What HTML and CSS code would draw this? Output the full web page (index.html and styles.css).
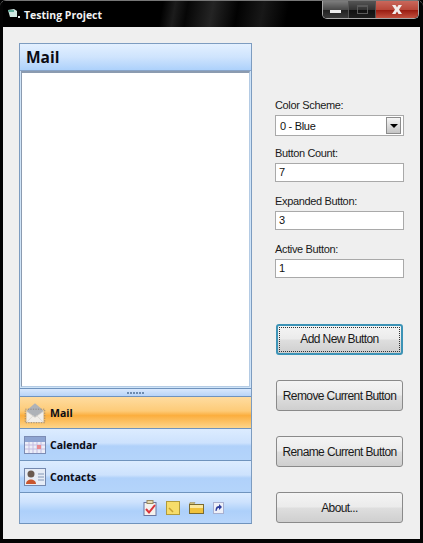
FILE: index.html
```html
<!DOCTYPE html>
<html>
<head>
<meta http-equiv="Content-Type" content="text/html; charset=utf-8"/>
<title>Testing Project</title>
<link rel="stylesheet" href="styles.css">
</head>
<body>
<div class="window">
  <div class="titlebar">
    <svg class="app-icon" width="16" height="16" viewBox="0 0 16 16">
      <path d="M1 3 L7 2 L10 4 L10 10 L3 10 Z" fill="#cfe8e2"/>
      <path d="M1 3 L7 3 L7 5 L2 5 Z" fill="#5fae9c"/>
      <rect x="11" y="9" width="2" height="2" fill="#dfe8e8"/>
    </svg>
    <span class="title">Testing Project</span>
    <div class="captions">
      <div class="cap cap-min"><span class="glyph-min"></span></div>
      <div class="cap cap-max"><span class="glyph-max"></span></div>
      <div class="cap cap-close">
        <svg width="16" height="11" viewBox="0 0 16 11"><path d="M3 1 L6.500 1 L8 3.400 L9.500 1 L13 1 L10 5.500 L13 10 L9.500 10 L8 7.600 L6.500 10 L3 10 L6 5.500 Z" fill="#f2ecea"/></svg>
      </div>
    </div>
  </div>

  <div class="client">
    <div class="navpane">
      <div class="pane-header">Mail</div>
      <div class="pane-body"><div class="pane-content"></div></div>
      <div class="grip"><span></span><span></span><span></span><span></span><span></span><span></span></div>

      <div class="navbtn active">
        <svg class="nav-icon" width="26" height="26" viewBox="0 0 26 26">
          <path d="M3 10 L13 1.500 L23 10 L23 24 L3 24 Z" fill="#aeb2b8"/>
          <path d="M3 11 L13 18 L23 11 L23 24 L3 24 Z" fill="#f1eeea"/>
          <path d="M3 11 L13 18 L23 11" fill="none" stroke="#ccc8c4"/>
          <path d="M3 24 L11 16 M23 24 L15 16" stroke="#d8d4d0" fill="none"/>
          <rect x="1.500" y="8.500" width="23" height="16" fill="none" stroke="#8a7f78" stroke-dasharray="1.500 1.500"/>
        </svg>
        <span>Mail</span>
      </div>
      <div class="navbtn">
        <svg class="nav-icon" width="22" height="18" viewBox="0 0 22 18">
          <rect x="0.500" y="0.500" width="21" height="17" fill="#eceef8" stroke="#7c8cb4"/>
          <rect x="1" y="1" width="20" height="5" fill="#8ea4d2"/>
          <path d="M1 9 H21 M1 13 H21 M5 6 V17 M9 6 V17 M13 6 V17 M17 6 V17" stroke="#c4bce0"/>
          <rect x="13" y="9" width="4" height="4" fill="#e88a90"/>
        </svg>
        <span>Calendar</span>
      </div>
      <div class="navbtn">
        <svg class="nav-icon" width="22" height="18" viewBox="0 0 22 18">
          <rect x="0.500" y="0.500" width="21" height="17" fill="#e6ecf6" stroke="#7488ae"/>
          <circle cx="7" cy="6" r="3.500" fill="#6a5a50"/>
          <path d="M2 16 C2 10 12 10 12 16 Z" fill="#c8562e"/>
          <path d="M14 6 H20 M14 9 H20 M14 12 H20" stroke="#a4b2cc" stroke-width="1.500"/>
        </svg>
        <span>Contacts</span>
      </div>
      <div class="nav-footer">
        <svg class="mini" width="14" height="16" viewBox="0 0 14 16">
          <rect x="1" y="2.500" width="12" height="13" fill="#f4f2ee" stroke="#6a76a0"/>
          <rect x="4" y="0.500" width="6" height="3" fill="#e4d8b0" stroke="#9a8a60"/>
          <path d="M3 9 L6 12.500 L12 5" fill="none" stroke="#d8343a" stroke-width="2"/>
        </svg>
        <svg class="mini" width="14" height="14" viewBox="0 0 14 14">
          <rect x="0.500" y="0.500" width="13" height="13" fill="#f6dc6a" stroke="#b09a3c"/>
          <path d="M3 7 L7 11" stroke="#c8a030" stroke-width="1.500"/>
        </svg>
        <svg class="mini" width="15" height="12" viewBox="0 0 15 12">
          <path d="M0.500 2 L5 2 L6 0.500 L1 0.500 Z" fill="#e8d68c" stroke="#8a7a44" stroke-width="0.500"/>
          <rect x="0.500" y="2.500" width="14" height="9" fill="#f0c23c" stroke="#7a6a30"/>
          <rect x="1" y="3" width="13" height="3" fill="#fae8a0"/>
        </svg>
        <svg class="mini" width="11" height="12" viewBox="0 0 11 12">
          <rect x="0.500" y="0.500" width="10" height="11" fill="#eef0f8" stroke="#a8b0d0"/>
          <path d="M2.500 9 C2.500 5 4 4 6 4 L6 2 L9 5 L6 8 L6 6 C4.500 6 4 7 3.500 9 Z" fill="#2c3c9c"/>
        </svg>
      </div>
    </div>

    <div class="options">
      <label class="field-label">Color Scheme:</label>
      <div class="combo">
        <span class="combo-text">0 - Blue</span>
        <span class="combo-arrow"></span>
      </div>
      <label class="field-label">Button Count:</label>
      <div class="textbox">7</div>
      <label class="field-label">Expanded Button:</label>
      <div class="textbox">3</div>
      <label class="field-label">Active Button:</label>
      <div class="textbox">1</div>

      <div class="buttons">
        <div class="btn focused"><span>Add New Button</span></div>
        <div class="btn"><span>Remove Current Button</span></div>
        <div class="btn"><span>Rename Current Button</span></div>
        <div class="btn"><span>About...</span></div>
      </div>
    </div>
  </div>
</div>
</body>
</html>
```

FILE: styles.css
```css
html, body {
  margin: 0;
  padding: 0;
  background: #000;
}

body {
  width: 423px;
  height: 543px;
  overflow: hidden;
  font-family: "Liberation Sans", Arial, sans-serif;
  font-size: 11px;
  color: #111;
}

.window {
  width: 423px;
  height: 543px;
  box-sizing: border-box;
  padding: 0 3px 4px 3px;
  background: #030303;
  border-top: 1px solid #777;
  border-radius: 6px 6px 0 0;
  display: flex;
  flex-direction: column;
}

.titlebar {
  height: 26px;
  display: flex;
  align-items: flex-start;
  background: linear-gradient(100deg, #000 38%, #1c1c1c 41%, #060606 44%, #242424 50%, #020202 56%, #181818 62%, #000 68%);
}

.app-icon {
  margin: 6px 0 0 4px;
}

.title {
  margin: 6px 0 0 1px;
  color: #f2f2f2;
  font-family: "Open Sans", sans-serif;
  font-size: 10.5px;
  font-weight: 700;
  line-height: 16px;
}

.captions {
  margin-left: auto;
  margin-right: 1px;
  display: flex;
  height: 17px;
  border: 1px solid #a8a8a8;
  border-top: none;
  border-radius: 0 0 5px 5px;
  overflow: hidden;
}

.cap {
  display: flex;
  align-items: center;
  justify-content: center;
  border-right: 1px solid #555;
}

.cap-min {
  width: 25px;
  background: linear-gradient(#7d7d7d, #4a4a4a 50%, #222 55%, #3a3a3a);
}

.cap-max {
  width: 26px;
  background: linear-gradient(#555, #333 50%, #111 55%, #1e1e1e);
}

.cap-close {
  width: 42px;
  border-right: none;
  background: linear-gradient(#c9685c, #b8483a 50%, #9a1d12 55%, #c2503e);
}

.glyph-min {
  width: 11px;
  height: 3px;
  margin-top: 4px;
  background: #eee;
}

.glyph-max {
  width: 11px;
  height: 9px;
  box-sizing: border-box;
  border: 1px solid #5a5a5a;
  border-top-width: 2px;
}

.client {
  flex: 1;
  min-height: 0;
  background: #efefef;
  display: flex;
  padding: 16px 16px 15px 16px;
}

/* left navigation pane */
.navpane {
  width: 233px;
  box-sizing: border-box;
  border: 1px solid #7d9cc0;
  border-bottom: 1px solid #6f93bd;
  display: flex;
  flex-direction: column;
}

.pane-header {
  height: 26px;
  flex: none;
  padding-left: 6px;
  font-family: "Open Sans", sans-serif;
  font-size: 15.5px;
  font-weight: 700;
  line-height: 26px;
  color: #0b0b14;
  background: linear-gradient(#e3f0ff, #cfe4fd 50%, #add1fb);
  border-bottom: 1px solid #88a4c8;
}

.pane-body {
  flex: 1;
  min-height: 0;
  padding: 0 1px 1px 1px;
  background: #cfe4f8;
  display: flex;
}

.pane-content {
  flex: 1;
  background: #fff;
  border-top: 2px solid #8b9bb0;
  border-left: 1px solid #8b9bb0;
  border-right: 1px solid #b4cbe4;
  border-bottom: 1px solid #b4cbe4;
}

.grip {
  height: 7px;
  flex: none;
  display: flex;
  justify-content: center;
  align-items: center;
  gap: 1px;
  background: linear-gradient(#d8e8fc, #b8d4f8);
  border-top: 1px solid #6f93bd;
  border-bottom: 1px solid #6f93bd;
}

.grip span {
  width: 2px;
  height: 2px;
  background: #6d8cb0;
}

.navbtn {
  height: 31px;
  flex: none;
  display: flex;
  align-items: center;
  font-family: "Open Sans", sans-serif;
  font-size: 10.5px;
  font-weight: 700;
  color: #0b0b14;
  background: linear-gradient(#dcecff, #cde2fd 45%, #b0d1fa 55%, #b4d4fa);
  border-bottom: 1px solid #6f93bd;
}

.navbtn.active {
  background: linear-gradient(#fedca0, #fdcb78 45%, #fbae3e 60%, #fdd58a);
}

.nav-icon {
  margin-left: 4px;
  width: 22px;
  flex: none;
}

.navbtn span {
  margin-left: 4px;
}

.nav-footer {
  height: 30px;
  flex: none;
  display: flex;
  align-items: center;
  justify-content: flex-end;
  gap: 9px;
  padding: 0 27px 0 0;
  background: linear-gradient(#dcecff, #cde2fd 30%, #add0fa 60%, #b8d6fb);
}

/* right column */
.options {
  width: 129px;
  margin-left: 23px;
  padding-top: 55px;
  display: flex;
  flex-direction: column;
}

.field-label {
  height: 14px;
  line-height: 14px;
  font-size: 11px;
  letter-spacing: -0.35px;
  margin-bottom: 3px;
  color: #1a1a1a;
}

.combo, .textbox {
  box-sizing: border-box;
  background: #fff;
  border: 1px solid #a9a9a9;
  font-size: 11px;
  letter-spacing: -0.3px;
  color: #111;
}

.combo {
  height: 21px;
  flex: none;
  margin-bottom: 10px;
  display: flex;
  align-items: center;
  padding: 0 2px 0 4px;
  justify-content: space-between;
}

.combo-arrow {
  width: 15px;
  height: 17px;
  box-sizing: border-box;
  border: 1px solid #8c8c8c;
  background: linear-gradient(#f6f6f6, #c4c4c4);
  display: flex;
  align-items: center;
  justify-content: center;
}

.combo-arrow::after {
  content: "";
  border-left: 4px solid transparent;
  border-right: 4px solid transparent;
  border-top: 4px solid #000;
}

.textbox {
  height: 19px;
  flex: none;
  line-height: 16px;
  padding-left: 3px;
  margin-bottom: 12px;
}

.buttons {
  margin-top: 34px;
  margin-left: 1px;
  width: 127px;
  display: flex;
  flex-direction: column;
  gap: 25px;
}

.btn {
  height: 31px;
  box-sizing: border-box;
  border: 1px solid #8a8a8a;
  border-radius: 3px;
  background: linear-gradient(#f4f4f4, #ebebeb 48%, #dedede 52%, #cfcfcf);
  display: flex;
  align-items: center;
  justify-content: center;
  font-size: 12px;
  letter-spacing: -0.6px;
  color: #1a1a1a;
  white-space: nowrap;
}

.btn.focused {
  border: 2px solid #3c93b6;
  padding: 1px;
}

.btn.focused span {
  flex: 1;
  align-self: stretch;
  text-align: center;
  line-height: 23px;
  border: 1px dotted #333;
}
```
